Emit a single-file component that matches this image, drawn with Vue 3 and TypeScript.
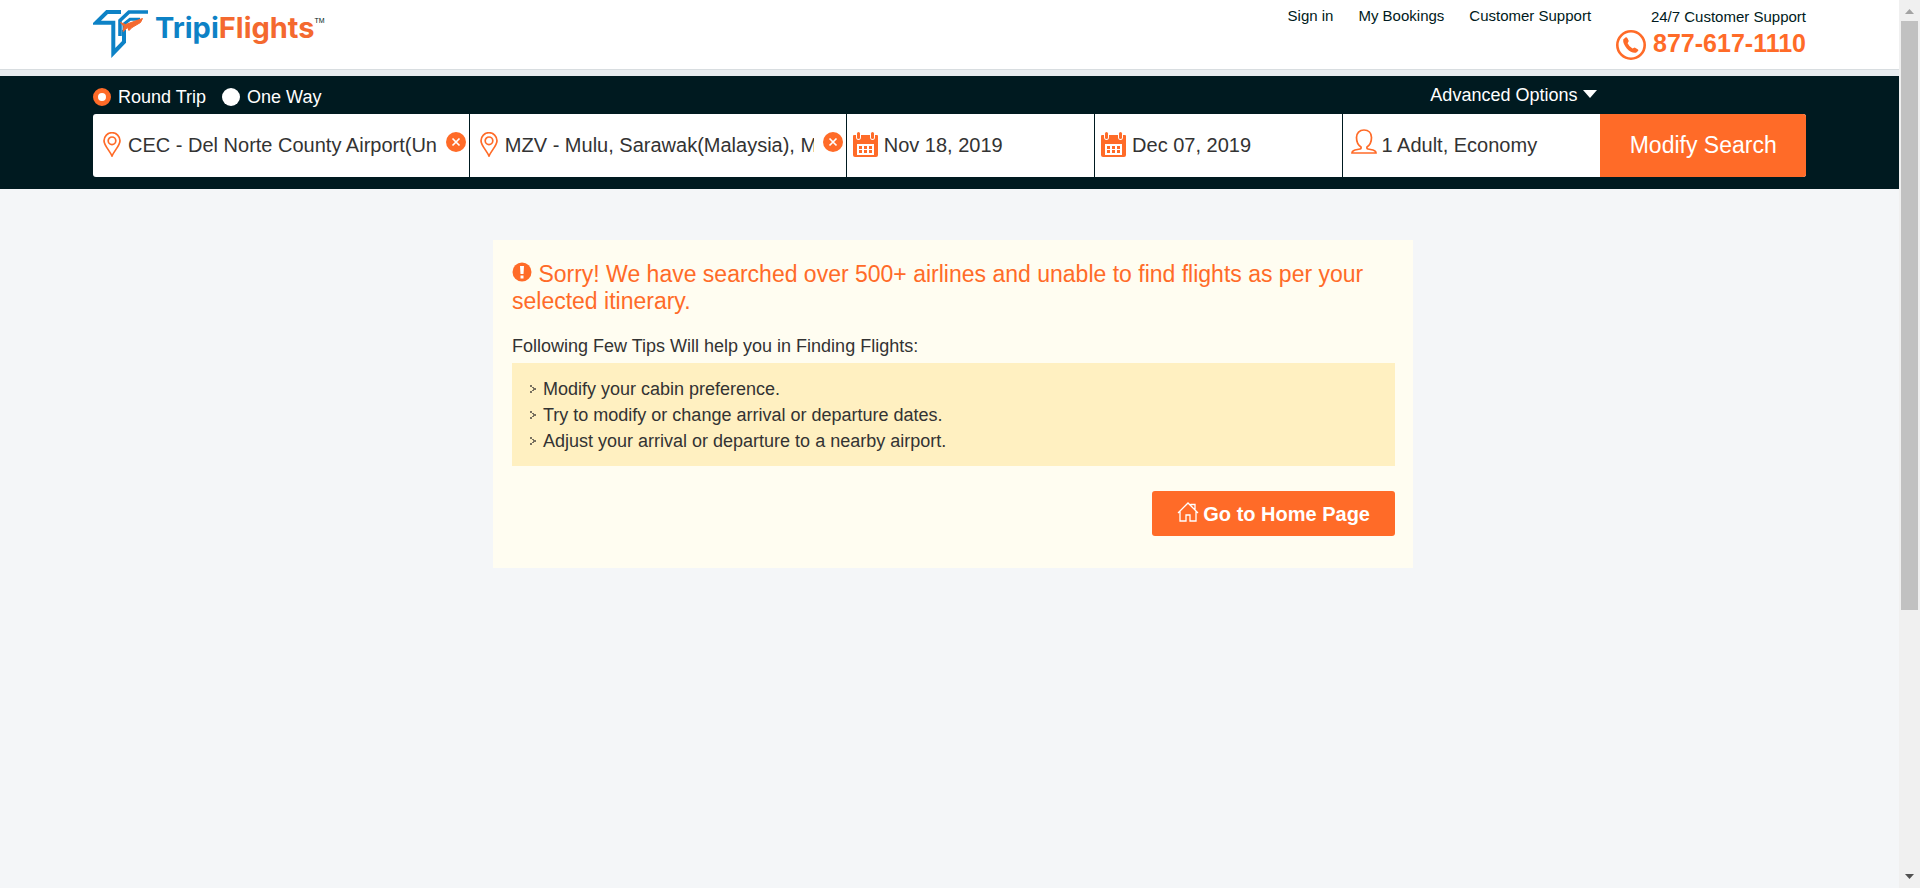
<script setup lang="ts">
import { ref } from 'vue'

type Trip = 'round' | 'oneway'

const trip = ref<Trip>('round')
const tripOptions: { value: Trip; label: string }[] = [
  { value: 'round', label: 'Round Trip' },
  { value: 'oneway', label: 'One Way' },
]

const places = ref([
  { id: 'origin', label: 'From', value: 'CEC - Del Norte County Airport(Un' },
  { id: 'destination', label: 'To', value: 'MZV - Mulu, Sarawak(Malaysia), M' },
])
const dates = ref([
  { id: 'depart', label: 'Departure date', value: 'Nov 18, 2019' },
  { id: 'return', label: 'Return date', value: 'Dec 07, 2019' },
])
const travellers = ref('1 Adult, Economy')

const navLinks: string[] = ['Sign in', 'My Bookings', 'Customer Support']
const tips: string[] = [
  'Modify your cabin preference.',
  'Try to modify or change arrival or departure dates.',
  'Adjust your arrival or departure to a nearby airport.',
]
</script>

<template>
  <div class="window">
    <div class="page">
      <header class="header">
        <a class="logo" href="#" aria-label="TripiFlights">
          <svg class="logo-mark" viewBox="0 0 56 49" aria-hidden="true">
            <path d="M28 2H14L3 12.800H20.300V43L31 32V20" fill="none" stroke="#0d82c6" stroke-width="4" />
            <path d="M55 2H36L27 10.500V26" fill="none" stroke="#0d82c6" stroke-width="3.600" />
            <path d="M47 9.300H37L31 14V30" fill="none" stroke="#0d82c6" stroke-width="3" />
            <path d="M27.500 12.500L32.500 14.500L49.500 8.500L47.500 12.500L39 17.500L36 20.500L34.500 17.500L30 21.500L31 16.500Z" fill="#f4692f" stroke="#f4692f" stroke-width="1" />
          </svg>
          <span class="logo-text">Tripi<span class="logo-accent">Flights</span></span><span class="tm">TM</span>
        </a>
        <nav class="nav">
          <a v-for="link in navLinks" :key="link" href="#">{{ link }}</a>
        </nav>
        <div class="support">
          <span>24/7 Customer Support</span>
          <a class="phone" href="tel:8776171110">
            <svg viewBox="0 0 30 30" aria-hidden="true">
              <circle cx="15" cy="15" r="13.700" fill="none" stroke="#ff6b28" stroke-width="2.600" />
              <path d="M7.200 9.500L9.800 7.200Q10.800 7 11.300 8L12.800 11L11.600 13.200Q13 16.500 16.500 18.400L18.700 17.600L22 19.500Q22.800 20.200 22 21L20 22.700Q15.500 23.500 10.800 18.500Q6.800 13.500 7.200 9.500Z" fill="#ff6b28" />
            </svg>
            877-617-1110
          </a>
        </div>
      </header>

      <form class="search" @submit.prevent>
        <div class="options">
          <label v-for="o in tripOptions" :key="o.value" class="trip">
            <input v-model="trip" type="radio" name="trip" :value="o.value" />{{ o.label }}
          </label>
          <button type="button" class="advanced">
            Advanced Options
            <svg viewBox="0 0 14 8" aria-hidden="true"><path d="M0 0H14L7 8Z" fill="#fff" /></svg>
          </button>
        </div>
        <div class="bar">
          <div v-for="p in places" :key="p.id" class="field place">
            <label :for="p.id" :aria-label="p.label">
              <svg class="pin" viewBox="0 0 18 25" fill="none" stroke="#ff6b28" aria-hidden="true">
                <path d="M9 24C7 19 1 13.500 1 8.700A8 8 0 0 1 17 8.700C17 13.500 11 19 9 24Z" stroke-width="1.700" />
                <circle cx="9" cy="8.800" r="3.800" stroke-width="1.700" />
              </svg>
            </label>
            <input :id="p.id" v-model="p.value" type="text" />
            <button type="button" class="clear" :aria-label="`Clear ${p.label}`" @click="p.value = ''">
              <svg viewBox="0 0 20 20" aria-hidden="true">
                <circle cx="10" cy="10" r="10" fill="#ff6b28" />
                <path d="M6.500 6.500L13.500 13.500M13.500 6.500L6.500 13.500" stroke="#fff" stroke-width="1.700" />
              </svg>
            </button>
          </div>
          <div v-for="d in dates" :key="d.id" class="field date">
            <label :for="d.id" :aria-label="d.label">
              <svg class="calendar" viewBox="0 0 25 25" aria-hidden="true">
                <path d="M0 4Q0 3 1 3H24Q25 3 25 4V23Q25 25 23 25H2Q0 25 0 23Z" fill="#ff6b28" />
                <path d="M3 0V5Q3 8 5.500 8T8 5V0ZM17 0V5Q17 8 19.500 8T22 5V0Z" fill="#fff" />
                <rect x="4" y="0" width="3" height="7" rx="1.500" fill="#ff6b28" />
                <rect x="18" y="0" width="3" height="7" rx="1.500" fill="#ff6b28" />
                <rect x="4" y="12" width="17" height="11" fill="#fff" />
                <path d="M6 14h3v3H6zM11 14h3v3h-3zM16 14h3v3h-3zM6 18h3v3H6zM11 18h3v3h-3zM16 18h3v3h-3z" fill="#ff6b28" />
              </svg>
            </label>
            <input :id="d.id" v-model="d.value" type="text" />
          </div>
          <div class="field people">
            <label for="travellers" aria-label="Travellers and cabin">
              <svg class="person" viewBox="0 0 26 25" fill="none" stroke="#ff6b28" stroke-width="1.700" aria-hidden="true">
                <path d="M10 18C7 16 5.500 12 5.500 8.500C5.500 4 8.500 1 13 1S20.500 4 20.500 8.500C20.500 12 19 16 16 18Q15.500 19.700 17 20L22 21Q25 22 25 24H1Q1 22 4 21L9 20Q10.500 19.700 10 18Z" />
              </svg>
            </label>
            <input id="travellers" v-model="travellers" type="text" />
          </div>
          <button type="submit" class="modify">Modify Search</button>
        </div>
      </form>

      <main class="main">
        <section class="notice">
          <h1>
            <svg viewBox="0 0 20 20" aria-hidden="true">
              <circle cx="10" cy="10" r="9.500" fill="#ff6b28" />
              <path d="M8 4H12L11.500 12H8.500ZM8.500 13.500H11.500V16.500H8.500Z" fill="#fff" />
            </svg>
            Sorry! We have searched over 500+ airlines and unable to find flights as per your selected itinerary.
          </h1>
          <h2>Following Few Tips Will help you in Finding Flights:</h2>
          <ul>
            <li v-for="tip in tips" :key="tip">
              <svg viewBox="0 0 6 8" aria-hidden="true">
                <path d="M0 0h2v2H0zM2 2h2v1H2zM3 3h3v2H3zM2 5h2v1H2zM0 6h2v2H0z" fill="#77705f" />
              </svg>
              {{ tip }}
            </li>
          </ul>
          <a class="home" href="#">
            <svg viewBox="0 0 22 20" fill="none" stroke="#fff" stroke-width="1.300" aria-hidden="true">
              <path d="M1 11L11 1L21 11M3 9.500V19H9V13H13V19H19V9.500M13.500 2.500H18V7.500" />
            </svg>
            Go to Home Page
          </a>
        </section>
      </main>
    </div>

    <div class="scrollbar" aria-hidden="true">
      <svg viewBox="0 0 21 21"><path d="M6 14L10.500 9L15 14Z" fill="#a3a3a3" /></svg>
      <div class="track"><div class="thumb"></div></div>
      <svg viewBox="0 0 21 21"><path d="M6 7L10.500 12L15 7Z" fill="#505050" /></svg>
    </div>
  </div>
</template>

<style>
body {
  background: #f4f6f8;
}
</style>

<style scoped>
* {
  box-sizing: border-box;
}
.window {
  display: flex;
  height: 100vh;
  font-family: 'Liberation Sans', Arial, sans-serif;
  color: #333;
}
.page {
  flex: 1;
  min-width: 0;
  overflow: hidden;
}
svg {
  display: block;
  flex: none;
}
a {
  color: inherit;
  text-decoration: none;
}
button,
input {
  font: inherit;
  color: inherit;
  border: 0;
  padding: 0;
  margin: 0;
  background: none;
}
.header {
  display: flex;
  align-items: flex-start;
  min-height: 76px;
  padding: 0 93px;
  background: linear-gradient(#fff 69px, #d8dde0 69px, #d8dde0 70px, #e8ecef 70px);
  color: #001a20;
  font-size: 15px;
  line-height: 18px;
}
.logo {
  display: flex;
  align-items: flex-start;
  padding-top: 10px;
  margin-right: auto;
}
.logo-mark {
  width: 56px;
  height: 49px;
}
.logo-text {
  padding-left: 6px;
  font-family: Inter, sans-serif;
  font-size: 29px;
  font-weight: 700;
  line-height: 36px;
  color: #0d82c6;
}
.logo-accent {
  color: #f4692f;
}
.tm {
  padding-top: 7px;
  font-size: 7px;
  line-height: 8px;
}
.nav {
  display: flex;
  gap: 25px;
  padding-top: 7px;
  margin-right: 25px;
}
.support {
  display: flex;
  flex-direction: column;
  align-items: flex-end;
  padding-top: 8px;
}
.phone {
  display: flex;
  align-items: center;
  gap: 7px;
  height: 38px;
  font-size: 25px;
  font-weight: 700;
  line-height: 30px;
  padding-bottom: 4px;
  color: #ff6b28;
}
.phone svg {
  width: 30px;
  height: 30px;
  margin-top: 4px;
}
.search {
  padding: 0 93px 12px;
  background: #001a20;
}
.options {
  display: flex;
  align-items: center;
  gap: 16px;
  height: 38px;
  padding-right: 12%;
  padding-top: 4px;
  font-size: 18px;
  color: #fff;
}
.trip {
  display: flex;
  align-items: center;
  gap: 7px;
}
.trip input {
  appearance: none;
  width: 18px;
  height: 18px;
  border-radius: 50%;
  background: #fff;
}
.trip input:checked {
  border: 5px solid #ff6b28;
}
.advanced {
  display: flex;
  align-items: center;
  gap: 6px;
  margin-left: auto;
  padding: 0 3px 4px 0;
}
.advanced svg {
  width: 14px;
  height: 8px;
  margin-bottom: 3px;
}
.bar {
  display: grid;
  grid-template-columns: 22fr 22fr 14.5fr 14.5fr 15fr 12fr;
  height: 63px;
  border-radius: 3px;
  overflow: hidden;
  background: #fff;
  font-size: 20px;
}
.field {
  display: flex;
  align-items: center;
  min-width: 0;
  border-right: 1px solid #001a20;
}
.field input {
  flex: 1;
  width: 0;
  height: 100%;
  outline: none;
}
.place {
  gap: 7px;
  padding: 0 3px 0 10px;
}
.place input {
  margin-right: 2px;
}
.pin {
  width: 18px;
  height: 25px;
}
.clear {
  padding-bottom: 7px;
}
.clear svg {
  width: 20px;
  height: 20px;
}
.date {
  gap: 6px;
  padding-left: 6px;
}
.calendar {
  width: 25px;
  height: 25px;
}
.people {
  gap: 4px;
  padding-left: 8px;
  border-right: 0;
}
.person {
  width: 26px;
  height: 25px;
}
.date label,
.place label {
  padding-bottom: 2px;
}
.people label {
  padding-bottom: 8px;
}
.modify {
  background: #ff6b28;
  color: #fff;
  font-size: 23px;
}
.main {
  padding: 51px 93px 0 100px;
}
.notice {
  display: flex;
  flex-direction: column;
  max-width: 920px;
  margin: 0 auto;
  padding: 21px 18px 32px 19px;
  background: #fffdf1;
}
h1 {
  margin: 0;
  font-size: 23px;
  font-weight: 400;
  line-height: 27px;
  color: #ff6b28;
}
h1 svg {
  display: inline-block;
  width: 20px;
  height: 20px;
  vertical-align: 0;
}
h2 {
  margin: 19px 0 5px;
  font-size: 18px;
  font-weight: 400;
  line-height: 24px;
}
ul {
  margin: 0;
  padding: 13px 18px 12px;
  list-style: none;
  background: #fff0c1;
  font-size: 18px;
  line-height: 26px;
}
li {
  display: flex;
  align-items: center;
  gap: 7px;
}
li svg {
  width: 6px;
  height: 8px;
}
.home {
  display: flex;
  align-items: center;
  align-self: flex-end;
  gap: 4px;
  height: 45px;
  margin-top: 25px;
  padding: 1px 25px 0;
  border-radius: 3px;
  background: #ff6b28;
  color: #fff;
  font-size: 20px;
  font-weight: 700;
}
.home svg {
  width: 22px;
  height: 20px;
  margin-bottom: 5px;
}
.scrollbar {
  display: flex;
  flex-direction: column;
  width: 21px;
  background: #f0f0f0;
}
.scrollbar svg {
  width: 21px;
  height: 21px;
}
.track {
  flex: 1;
  padding: 0 2px;
}
.thumb {
  height: 69.6%;
  background: #c1c1c1;
}
</style>
